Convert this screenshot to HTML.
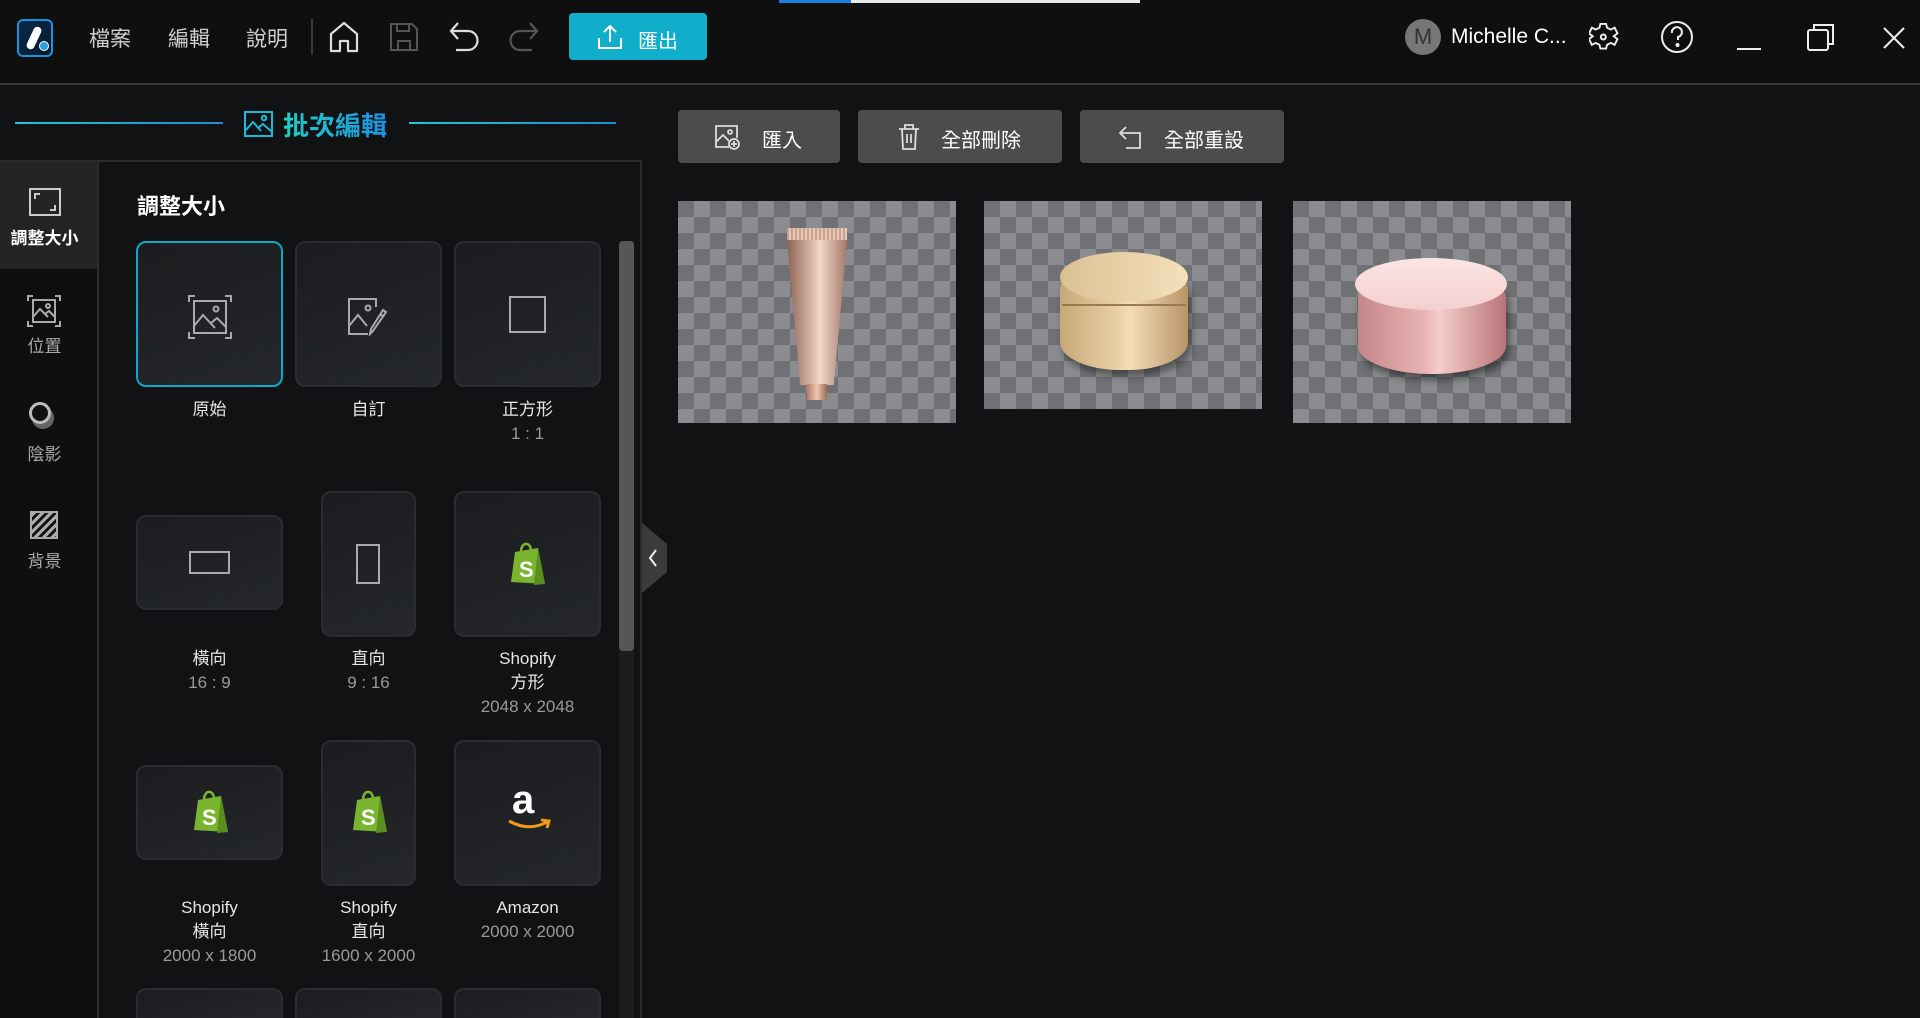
<!DOCTYPE html>
<html><head><meta charset="utf-8">
<style>
*{margin:0;padding:0;box-sizing:border-box}
html,body{width:1920px;height:1018px;overflow:hidden}
body{background:#111214;font-family:"Liberation Sans","Noto Sans CJK TC",sans-serif;color:#ddd;position:relative}
.abs{position:absolute}
.hdr{left:0;top:0;width:1920px;height:85px;background:#0f0f10;border-bottom:2px solid #3a3a3c}
.menu{font-size:21px;color:#cfcfcf;top:23px}
.t{position:absolute;white-space:nowrap}
.card{position:absolute;border:2px solid #2a2c2f;border-radius:10px;background:linear-gradient(160deg,#1a1c1e,#25282b)}
.lbl{position:absolute;text-align:center;width:147px;font-size:17px;color:#e6e6e6;line-height:24px}
.lbl span{color:#9a9a9a}
.btn{position:absolute;top:110px;height:53px;background:#4b4c4e;border-radius:4px;color:#fff;font-size:19px}
.chk{position:absolute;background-color:#6f7174;background-image:conic-gradient(#8a8c8f 25%,transparent 0 50%,#8a8c8f 0 75%,transparent 0);background-size:32px 32px}
.side{position:absolute;left:0;width:89px;text-align:center;font-size:17px;color:#a9a9a9}
</style></head><body>
<div class="abs hdr"></div>
<div class="abs" style="left:779px;top:0;width:361px;height:3px;background:#e8e8e8"></div>
<div class="abs" style="left:779px;top:0;width:72px;height:3px;background:#1a7fe0"></div>
<div class="abs" style="left:17px;top:19px;width:36px;height:38px;border-radius:6px;border:2px solid #1e90e0;background:linear-gradient(135deg,#0a2a4a,#06182c)">
<div class="abs" style="left:11px;top:5px;width:8px;height:24px;background:#fff;border-radius:4px;transform:rotate(25deg)"></div>
<div class="abs" style="left:20px;top:20px;width:10px;height:10px;border-radius:50%;background:#2aa0e8;border:1px solid #fff"></div>
</div>
<div class="t menu" style="left:89px">檔案</div>
<div class="t menu" style="left:168px">編輯</div>
<div class="t menu" style="left:246px">說明</div>
<div class="abs" style="left:311px;top:19px;width:2px;height:36px;background:#3a3a3a"></div>
<svg class="abs" style="left:328px;top:20px" width="32" height="34" viewBox="0 0 32 34" fill="none" stroke="#ddd" stroke-width="2.2" stroke-linejoin="round"><path d="M3 14 L16 3 L29 14 V31 H20 V21 H12 V31 H3 Z"/></svg>
<svg class="abs" style="left:389px;top:22px" width="30" height="30" viewBox="0 0 30 30" fill="none" stroke="#555" stroke-width="2"><path d="M2 2 H23 L28 7 V28 H2 Z M8 2 V9 H20 V2 M9 28 V19 H21 V28"/></svg>
<svg class="abs" style="left:448px;top:20px" width="32" height="34" viewBox="0 0 32 34" fill="none" stroke="#ddd" stroke-width="2.2"><path d="M3 11 H20 A9 9 0 0 1 20 30 H8 M10 3 L3 11 L10 19"/></svg>
<svg class="abs" style="left:508px;top:20px" width="32" height="34" viewBox="0 0 32 34" fill="none" stroke="#555" stroke-width="2.2"><path d="M29 11 H12 A9 9 0 0 0 12 30 H24 M22 3 L29 11 L22 19"/></svg>
<div class="abs" style="left:569px;top:13px;width:138px;height:47px;background:#10aecb;border-radius:4px"></div>
<svg class="abs" style="left:597px;top:24px" width="26" height="26" viewBox="0 0 26 26" fill="none" stroke="#fff" stroke-width="2"><path d="M13 18 V2 M7 8 L13 2 L19 8 M2 14 V24 H24 V14"/></svg>
<div class="t" style="left:638px;top:25px;font-size:20px;color:#fff">匯出</div>
<div class="abs" style="left:1405px;top:19px;width:36px;height:36px;border-radius:50%;background:#777;color:#333;font-size:22px;text-align:center;line-height:36px">M</div>
<div class="t" style="left:1451px;top:25px;font-size:21px;color:#fff">Michelle C...</div>
<svg class="abs" style="left:1589px;top:22px" width="30" height="30" viewBox="0 0 30 30" fill="none" stroke="#eee" stroke-width="2"><path d="M12 2 H18 L19 6 L23 8 L27 6 L30 12 L26 15 L30 18 L27 24 L23 22 L19 24 L18 28 H12 L11 24 L7 22 L3 24 L0 18 L4 15 L0 12 L3 6 L7 8 L11 6 Z" transform="scale(.95)"/><circle cx="14.3" cy="15" r="2.5"/></svg>
<svg class="abs" style="left:1660px;top:20px" width="34" height="34" viewBox="0 0 34 34" fill="none" stroke="#eee" stroke-width="2"><circle cx="17" cy="17" r="15"/><path d="M12 13 A5 5 0 1 1 18 17 V20"/><circle cx="17.5" cy="25" r="1" fill="#eee"/></svg>
<div class="abs" style="left:1737px;top:48px;width:24px;height:2px;background:#eee"></div>
<svg class="abs" style="left:1806px;top:22px" width="30" height="30" viewBox="0 0 30 30" fill="none" stroke="#eee" stroke-width="2"><rect x="2" y="8" width="20" height="20" rx="2"/><path d="M8 8 V3 H27 V22 H22"/></svg>
<svg class="abs" style="left:1882px;top:26px" width="24" height="24" viewBox="0 0 24 24" stroke="#eee" stroke-width="2"><path d="M2 2 L22 22 M22 2 L2 22"/></svg>

<div class="abs" style="left:15px;top:122px;width:208px;height:2px;background:linear-gradient(90deg,#1fc8d0,#1f8ad8)"></div>
<div class="abs" style="left:409px;top:122px;width:207px;height:2px;background:linear-gradient(90deg,#1fc8d0,#1f8ad8)"></div>
<svg class="abs" style="left:244px;top:111px" width="29" height="26" viewBox="0 0 29 26" fill="none" stroke="#1fb8d8" stroke-width="2"><rect x="1" y="1" width="27" height="24"/><path d="M1 20 L9 11 L17 20 M14 17 L19 13 L28 21"/><circle cx="20" cy="7" r="2.3"/></svg>
<div class="t" style="left:283px;top:106px;font-size:26px;font-weight:bold;background:linear-gradient(90deg,#1fd0c8,#2090e0);-webkit-background-clip:text;color:transparent">批次編輯</div>

<div class="abs" style="left:0;top:160px;width:642px;height:858px;border-top:2px solid #2b2c2e;border-right:2px solid #2b2c2e;background:#111214"></div>
<div class="abs" style="left:0;top:162px;width:99px;height:856px;background:#0e0f10;border-right:2px solid #2b2c2e"></div>
<div class="abs" style="left:0;top:162px;width:97px;height:107px;background:#232425"></div>
<svg class="abs" style="left:29px;top:188px" width="32" height="28" viewBox="0 0 32 28" fill="none" stroke="#ccc" stroke-width="2"><rect x="1" y="1" width="30" height="26"/><path d="M6 11 V6 H11 M26 17 V22 H21"/></svg>
<div class="side" style="top:224px;color:#fff;font-weight:bold">調整大小</div>
<svg class="abs" style="left:27px;top:295px" width="34" height="32" viewBox="0 0 34 32" fill="none" stroke="#aaa" stroke-width="2"><path d="M1 6 V1 H6 M28 1 H33 V6 M33 26 V31 H28 M6 31 H1 V26"/><rect x="6" y="5" width="22" height="22"/><path d="M6 22 L13 14 L21 22 M18 19 L22 16 L28 22"/><circle cx="21" cy="11" r="2"/></svg>
<div class="side" style="top:332px">位置</div>
<div class="abs" style="left:32px;top:407px;width:22px;height:22px;border-radius:50%;background:#666"></div>
<div class="abs" style="left:29px;top:402px;width:22px;height:22px;border-radius:50%;border:3px solid #bbb;background:#111"></div>
<div class="side" style="top:440px">陰影</div>
<div class="abs" style="left:30px;top:511px;width:28px;height:28px;border:2px solid #aaa;background:repeating-linear-gradient(135deg,#aaa 0 3px,#111 3px 6px)"></div>
<div class="side" style="top:547px">背景</div>

<div class="t" style="left:137px;top:189px;font-size:22px;font-weight:bold;color:#fff">調整大小</div>

<div class="card" style="left:136px;top:241px;width:147px;height:146px;border-color:#12a8c8"></div>
<svg class="abs" style="left:188px;top:295px" width="44" height="44" viewBox="0 0 44 44" fill="none" stroke="#aaa" stroke-width="2"><path d="M1 7 V1 H7 M37 1 H43 V7 M43 37 V43 H37 M7 43 H1 V37"/><rect x="6" y="6" width="32" height="32"/><path d="M6 31 L15 20 L27 33 M23 28 L29 23 L38 32"/><circle cx="28" cy="14" r="2.5"/></svg>
<div class="card" style="left:295px;top:241px;width:147px;height:146px"></div>
<svg class="abs" style="left:348px;top:298px" width="42" height="38" viewBox="0 0 42 38" fill="none" stroke="#aaa" stroke-width="2"><path d="M28 9 V1 H1 V36 H20"/><path d="M1 28 L10 17 L19 28"/><circle cx="20" cy="10" r="2.5"/><path d="M38 14 L25 33 L22 36 L23 31 L35 12 Z M32 16 L36 19"/></svg>
<div class="card" style="left:454px;top:241px;width:147px;height:146px"></div>
<div class="abs" style="left:509px;top:296px;width:37px;height:37px;border:2px solid #aaa"></div>
<div class="lbl" style="left:136px;top:398px">原始</div>
<div class="lbl" style="left:295px;top:398px">自訂</div>
<div class="lbl" style="left:454px;top:398px">正方形<br><span>1 : 1</span></div>

<div class="card" style="left:136px;top:515px;width:147px;height:95px"></div>
<div class="abs" style="left:189px;top:551px;width:41px;height:23px;border:2px solid #aaa"></div>
<div class="card" style="left:321px;top:491px;width:95px;height:146px"></div>
<div class="abs" style="left:356px;top:544px;width:24px;height:40px;border:2px solid #aaa"></div>
<div class="card" style="left:454px;top:491px;width:147px;height:146px"></div>
<svg class="abs" style="left:508px;top:542px" width="40" height="44" viewBox="0 0 40 44"><path d="M7 10 L30 6 L37 42 L3 40 Z" fill="#7ab530"/><path d="M30 6 L37 42 L26 43 Z" fill="#5a8e1e"/><path d="M13 10 C13 0 22 -1 23 8" stroke="#7ab530" stroke-width="2.5" fill="none"/><text x="11" y="35" font-family="Liberation Sans" font-weight="bold" font-size="22" fill="#fff">S</text></svg>
<div class="lbl" style="left:136px;top:647px">橫向<br><span>16 : 9</span></div>
<div class="lbl" style="left:295px;top:647px">直向<br><span>9 : 16</span></div>
<div class="lbl" style="left:454px;top:647px">Shopify<br>方形<br><span>2048 x 2048</span></div>

<div class="card" style="left:136px;top:765px;width:147px;height:95px"></div>
<svg class="abs" style="left:191px;top:790px" width="40" height="44" viewBox="0 0 40 44"><path d="M7 10 L30 6 L37 42 L3 40 Z" fill="#7ab530"/><path d="M30 6 L37 42 L26 43 Z" fill="#5a8e1e"/><path d="M13 10 C13 0 22 -1 23 8" stroke="#7ab530" stroke-width="2.5" fill="none"/><text x="11" y="35" font-family="Liberation Sans" font-weight="bold" font-size="22" fill="#fff">S</text></svg>
<div class="card" style="left:321px;top:740px;width:95px;height:146px"></div>
<svg class="abs" style="left:350px;top:790px" width="40" height="44" viewBox="0 0 40 44"><path d="M7 10 L30 6 L37 42 L3 40 Z" fill="#7ab530"/><path d="M30 6 L37 42 L26 43 Z" fill="#5a8e1e"/><path d="M13 10 C13 0 22 -1 23 8" stroke="#7ab530" stroke-width="2.5" fill="none"/><text x="11" y="35" font-family="Liberation Sans" font-weight="bold" font-size="22" fill="#fff">S</text></svg>
<div class="card" style="left:454px;top:740px;width:147px;height:146px"></div>
<div class="t" style="left:512px;top:778px;font-size:40px;font-weight:bold;color:#fff">a</div>
<svg class="abs" style="left:507px;top:818px" width="46" height="14" viewBox="0 0 46 14" fill="none" stroke="#f39a1a" stroke-width="3"><path d="M2 3 Q22 14 40 4 M34 2 L42 3 L40 10"/></svg>
<div class="lbl" style="left:136px;top:896px">Shopify<br>橫向<br><span>2000 x 1800</span></div>
<div class="lbl" style="left:295px;top:896px">Shopify<br>直向<br><span>1600 x 2000</span></div>
<div class="lbl" style="left:454px;top:896px">Amazon<br><span>2000 x 2000</span></div>

<div class="card" style="left:136px;top:988px;width:147px;height:30px;border-bottom:none;border-radius:10px 10px 0 0"></div>
<div class="card" style="left:295px;top:988px;width:147px;height:30px;border-bottom:none;border-radius:10px 10px 0 0"></div>
<div class="card" style="left:454px;top:988px;width:147px;height:30px;border-bottom:none;border-radius:10px 10px 0 0"></div>

<div class="abs" style="left:619px;top:241px;width:15px;height:777px;background:#1c1d1f"></div>
<div class="abs" style="left:619px;top:241px;width:15px;height:410px;background:#555658;border-radius:4px"></div>
<div class="abs" style="left:642px;top:523px;width:25px;height:70px;background:#3a3b3d;clip-path:polygon(0 0,0 100%,100% 70%,100% 30%)"></div>
<svg class="abs" style="left:647px;top:548px" width="12" height="20" viewBox="0 0 12 20" fill="none" stroke="#eee" stroke-width="2"><path d="M9 2 L3 10 L9 18"/></svg>

<div class="btn" style="left:678px;width:162px"></div>
<svg class="abs" style="left:715px;top:125px" width="26" height="26" viewBox="0 0 26 26" fill="none" stroke="#ddd" stroke-width="1.8"><path d="M14 22 H1 V1 H22 V13"/><path d="M1 17 L8 10 L14 16"/><circle cx="15" cy="7" r="2"/><circle cx="19" cy="19" r="5"/><path d="M19 16 V22 M16 19 H22"/></svg>
<div class="t" style="left:762px;top:124px;font-size:20px;color:#fff">匯入</div>
<div class="btn" style="left:858px;width:204px"></div>
<svg class="abs" style="left:898px;top:124px" width="22" height="26" viewBox="0 0 22 26" fill="none" stroke="#ddd" stroke-width="1.8"><path d="M1 5 H21 M7 5 V1 H15 V5 M4 5 L5 25 H17 L18 5 M9 10 V19 M13 10 V19"/></svg>
<div class="t" style="left:941px;top:124px;font-size:20px;color:#fff">全部刪除</div>
<div class="btn" style="left:1080px;width:204px"></div>
<svg class="abs" style="left:1118px;top:126px" width="26" height="24" viewBox="0 0 26 24" fill="none" stroke="#ddd" stroke-width="1.8"><path d="M8 1 L2 7 L8 13 M2 7 H22 V22 H8"/></svg>
<div class="t" style="left:1164px;top:124px;font-size:20px;color:#fff">全部重設</div>

<div class="chk" style="left:678px;top:201px;width:278px;height:222px"></div>
<div class="abs" style="left:787px;top:228px;width:60px;height:12px;background:repeating-linear-gradient(90deg,#c9a08a 0 2px,#e8c8b6 2px 4px)"></div>
<div class="abs" style="left:787px;top:240px;width:60px;height:145px;background:linear-gradient(90deg,#8c6456,#d9b3a2 40%,#f3d8cb 55%,#a5786a);clip-path:polygon(0 0,100% 0,78% 100%,22% 100%)"></div>
<div class="abs" style="left:807px;top:384px;width:20px;height:16px;background:linear-gradient(90deg,#b07a66,#f0c8b5,#a06a56)"></div>
<div class="chk" style="left:984px;top:201px;width:278px;height:208px"></div>
<div class="abs" style="left:1060px;top:262px;width:128px;height:108px;border-radius:60px/28px;background:linear-gradient(90deg,#c8a878,#ead0a6 45%,#f4ddb8 55%,#b89468);box-shadow:3px 6px 8px rgba(0,0,0,.4)"></div>
<div class="abs" style="left:1060px;top:252px;width:128px;height:50px;border-radius:50%;background:linear-gradient(90deg,#dcc094,#f4e0bc)"></div>
<div class="abs" style="left:1062px;top:304px;width:124px;height:2px;background:#9c7a50"></div>
<div class="chk" style="left:1293px;top:201px;width:278px;height:222px"></div>
<div class="abs" style="left:1358px;top:270px;width:148px;height:104px;border-radius:74px/28px;background:linear-gradient(90deg,#c4868a,#e9b4b4 45%,#f5cdca 55%,#b87478);box-shadow:3px 6px 8px rgba(0,0,0,.45)"></div>
<div class="abs" style="left:1355px;top:258px;width:152px;height:52px;border-radius:50%;background:linear-gradient(180deg,#fbe6e4,#f3d0cf)"></div>
</body></html>
